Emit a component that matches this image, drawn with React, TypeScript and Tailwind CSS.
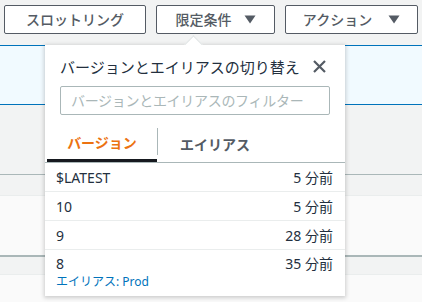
import React from "react";

const Caret = () => (
  <svg width="12" height="9" viewBox="0 0 12 9" className="shrink-0">
    <path d="M0.5 0.5 L11.5 0.5 L6 8.5 Z" fill="#545b64" />
  </svg>
);

const rows = [
  { v: "$LATEST", t: "5 分前" },
  { v: "10", t: "5 分前" },
  { v: "9", t: "28 分前" },
];

export default function App() {
  return (
    <div
      className="relative w-[422px] h-[302px] overflow-hidden bg-[#f2f3f3]"
      style={{ fontFamily: '"Noto Sans", "Noto Sans CJK JP", sans-serif' }}
    >
      <div className="h-[45px] flex items-start pt-[5px] pl-[4px] gap-[10px]">
        <button className="h-[29px] w-[142px] flex items-center justify-center rounded-[2px] border border-[#545b64] bg-white text-[14px] font-medium text-[#545b64]">
          スロットリング
        </button>
        <button className="h-[29px] w-[119px] flex items-center justify-center gap-[12px] rounded-[2px] border border-[#545b64] bg-white text-[14px] font-medium text-[#545b64]">
          限定条件 <Caret />
        </button>
        <button className="h-[29px] w-[133px] flex items-center justify-center gap-[16px] rounded-[2px] border border-[#545b64] bg-white text-[14px] font-medium text-[#545b64]">
          アクション <Caret />
        </button>
      </div>
      <div className="h-[60px] border-y border-[#0073bb] bg-[#f1faff]" />
      <div className="h-[69px] bg-[#f2f3f3]" />
      <div className="h-[22px] border-t border-b border-t-[#aab7b8] border-b-[#eaeded] bg-[#f2f3f3]" />
      <div className="h-[59px] bg-[#fafafa]" />
      <div className="h-[20px] border-t-2 border-b border-t-[#aab7b8] border-b-[#eaeded] bg-[#f2f3f3]" />
      <div className="h-[40px] bg-[#fafafa]" />

      <div className="absolute left-[45px] top-[45px] w-[300px] h-[251px] bg-white shadow-[0_1px_4px_1px_rgba(0,0,0,0.18)]">
        <div className="absolute left-[142px] top-[-7px] w-[13px] h-[13px] rotate-45 bg-white border-l border-t border-[#dfe3e3]" />
        <div className="relative bg-white">
          <div className="flex items-center justify-between pl-[15px] pr-[19px] pt-[10px] h-[33px]">
            <span className="text-[15px] text-[#232f3e] leading-[20px]">
              バージョンとエイリアスの切り替え
            </span>
            <svg width="13" height="13" viewBox="0 0 13 13">
              <path d="M1 1 L12 12 M12 1 L1 12" stroke="#545b64" strokeWidth="2.2" />
            </svg>
          </div>
          <div className="px-[15px] mt-[8px]">
            <div className="h-[29px] rounded-[2px] border border-[#aab7b8] flex items-center pl-[10px] text-[14px] text-[#aab7b8] tracking-[-0.3px]">
              バージョンとエイリアスのフィルター
            </div>
          </div>
          <div className="mt-[13px] flex h-[35px] border-b border-[#aab7b8] pl-[2px]">
            <div className="w-[110px] flex items-center justify-center border-b-[3px] border-[#16191f] text-[14px] font-bold text-[#ec7211] pb-[2px]">
              バージョン
            </div>
            <div className="flex items-start">
              <div className="w-px h-[27px] bg-[#aab7b8]" />
            </div>
            <div className="w-[114px] flex items-center justify-center text-[14px] font-bold text-[#545b64] pb-[2px]">
              エイリアス
            </div>
          </div>
          {rows.map((r) => (
            <div
              key={r.v}
              className="h-[29px] flex items-center justify-between pl-[11px] pr-[12px] border-b border-[#eaeded] text-[14px] text-[#232f3e]"
            >
              <span>{r.v}</span>
              <span>{r.t}</span>
            </div>
          ))}
          <div className="pl-[11px] pr-[12px] pt-[4px] text-[14px] text-[#232f3e]">
            <div className="flex justify-between leading-[20px]">
              <span>8</span>
              <span>35 分前</span>
            </div>
            <div className="text-[12px] leading-[16px] text-[#0073bb]">エイリアス: Prod</div>
          </div>
        </div>
      </div>
    </div>
  );
}
